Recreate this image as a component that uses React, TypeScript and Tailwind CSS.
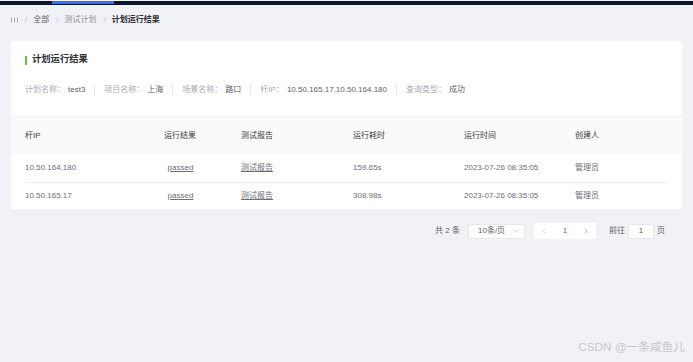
import React from "react";

const columns = ["杆IP", "运行结果", "测试报告", "运行耗时", "运行时间", "创建人"];

const rows = [
  { ip: "10.50.164.180", result: "passed", cost: "159.65s", time: "2023-07-26 08:35:05", user: "管理员" },
  { ip: "10.50.165.17", result: "passed", cost: "308.98s", time: "2023-07-26 08:35:05", user: "管理员" },
];

const info = [
  { label: "计划名称：", value: "test3" },
  { label: "项目名称：", value: "上海" },
  { label: "场景名称：", value: "路口" },
  { label: "杆IP：", value: "10.50.165.17,10.50.164.180" },
  { label: "查询类型：", value: "成功" },
];

const gridCols = "grid grid-cols-[139px_77px_112px_111px_111px_1fr] items-center px-[14px]";

function Row({ r, h }: { r: (typeof rows)[number]; h: string }) {
  return (
    <div className={`${gridCols} ${h} text-[8px] text-[#6b6e75]`}>
      <span>{r.ip}</span>
      <span className="inline-block w-[33px] text-center underline">{r.result}</span>
      <span className="underline">测试报告</span>
      <span>{r.cost}</span>
      <span>{r.time}</span>
      <span>{r.user}</span>
    </div>
  );
}

export default function App() {
  return (
    <div
      className="relative w-[693px] h-[362px] overflow-hidden bg-[#f0f2f5]"
      style={{ fontFamily: '"Liberation Sans", "Noto Sans CJK SC", sans-serif' }}
    >
      {/* top nav strip */}
      <div className="h-[4px] bg-[#0a1629]">
        <div className="ml-[52px] w-[62px] h-[3px] mt-[1px] bg-[#3d6cf0]" />
      </div>

      {/* breadcrumb */}
      <div className="h-[30px] px-[11px] flex items-center text-[8px] text-[#909399]">
        <svg width="7" height="6" viewBox="0 0 7 6" className="mr-[7px]">
          <path d="M0.5 0.5v5M3.5 0.5v5M6.5 0.5v5" stroke="#a8abb2" strokeWidth="1" />
        </svg>
        <span className="text-[#c0c4cc]">/</span>
        <span className="ml-[6px] mr-[7px] text-[#606266]">全部</span>
        <span className="text-[#c0c4cc]">/</span>
        <span className="ml-[6px] mr-[7px] text-[#909399]">测试计划</span>
        <span className="text-[#c0c4cc]">/</span>
        <span className="ml-[6px] font-bold text-[#303133]">计划运行结果</span>
      </div>

      <div className="px-[11px] mt-[6px]">
        {/* summary card */}
        <div className="h-[75px] bg-white rounded-[3px] px-[14px] pt-[13px]">
          <div className="h-[12px] flex items-center">
            <span className="w-[2px] h-[9px] bg-[#67c23a] mr-[5px]" />
            <span className="text-[9.3px] font-bold text-[#303133]">计划运行结果</span>
          </div>
          <div className="mt-[18px] h-[12px] flex items-center text-[8px]">
            {info.map((it, i) => (
              <React.Fragment key={it.label}>
                {i > 0 && <span className="w-px h-[10px] bg-[#e4e7ed] mx-[9px]" />}
                <span className="text-[#a8abb2]">{it.label}</span>
                <span className="ml-[3px] text-[#606266]">{it.value}</span>
              </React.Fragment>
            ))}
          </div>
        </div>

        {/* result table */}
        <div className="mt-[1px] bg-white">
          <div className={`${gridCols} h-[37px] bg-[#fafafa] text-[8px] text-[#3a3c40]`}>
            {columns.map((c) => (
              <span key={c}>{c}</span>
            ))}
          </div>
          <Row r={rows[0]} h="h-[28px]" />
          <div className="mx-[14px] h-px bg-[#ebeef5]" />
          <Row r={rows[1]} h="h-[26px]" />
        </div>

        {/* pagination */}
        <div className="mt-[14px] pr-[17px] flex justify-end items-center h-[16px] text-[8px] text-[#606266]">
          <span className="mr-[8px]">共 2 条</span>
          <div className="w-[57px] h-[15px] bg-white border border-[#e4e7ed] rounded-[2px] flex items-center justify-between pl-[9px] pr-[5px] mr-[9px]">
            <span>10条/页</span>
            <svg width="6" height="4" viewBox="0 0 6 4">
              <path d="M0.5 0.8L3 3.2L5.5 0.8" fill="none" stroke="#c0c4cc" strokeWidth="0.8" />
            </svg>
          </div>
          <div className="w-[62px] h-[16px] bg-white flex items-center justify-between px-[8px] mr-[13px]">
            <svg width="4" height="6" viewBox="0 0 4 6">
              <path d="M3.2 0.5L0.8 3L3.2 5.5" fill="none" stroke="#c0c4cc" strokeWidth="0.8" />
            </svg>
            <span className="text-[#4b6cf0]">1</span>
            <svg width="4" height="6" viewBox="0 0 4 6">
              <path d="M0.8 0.5L3.2 3L0.8 5.5" fill="none" stroke="#a8abb2" strokeWidth="0.8" />
            </svg>
          </div>
          <span>前往</span>
          <div className="w-[26px] h-[15px] bg-white border border-[#e4e7ed] rounded-[2px] mx-[3px] flex items-center justify-center">
            1
          </div>
          <span>页</span>
        </div>
      </div>

      {/* watermark */}
      <div className="absolute right-[8px] bottom-[6px] text-[11.7px] text-[#c6c8cc]">CSDN @一条咸鱼儿</div>
    </div>
  );
}
